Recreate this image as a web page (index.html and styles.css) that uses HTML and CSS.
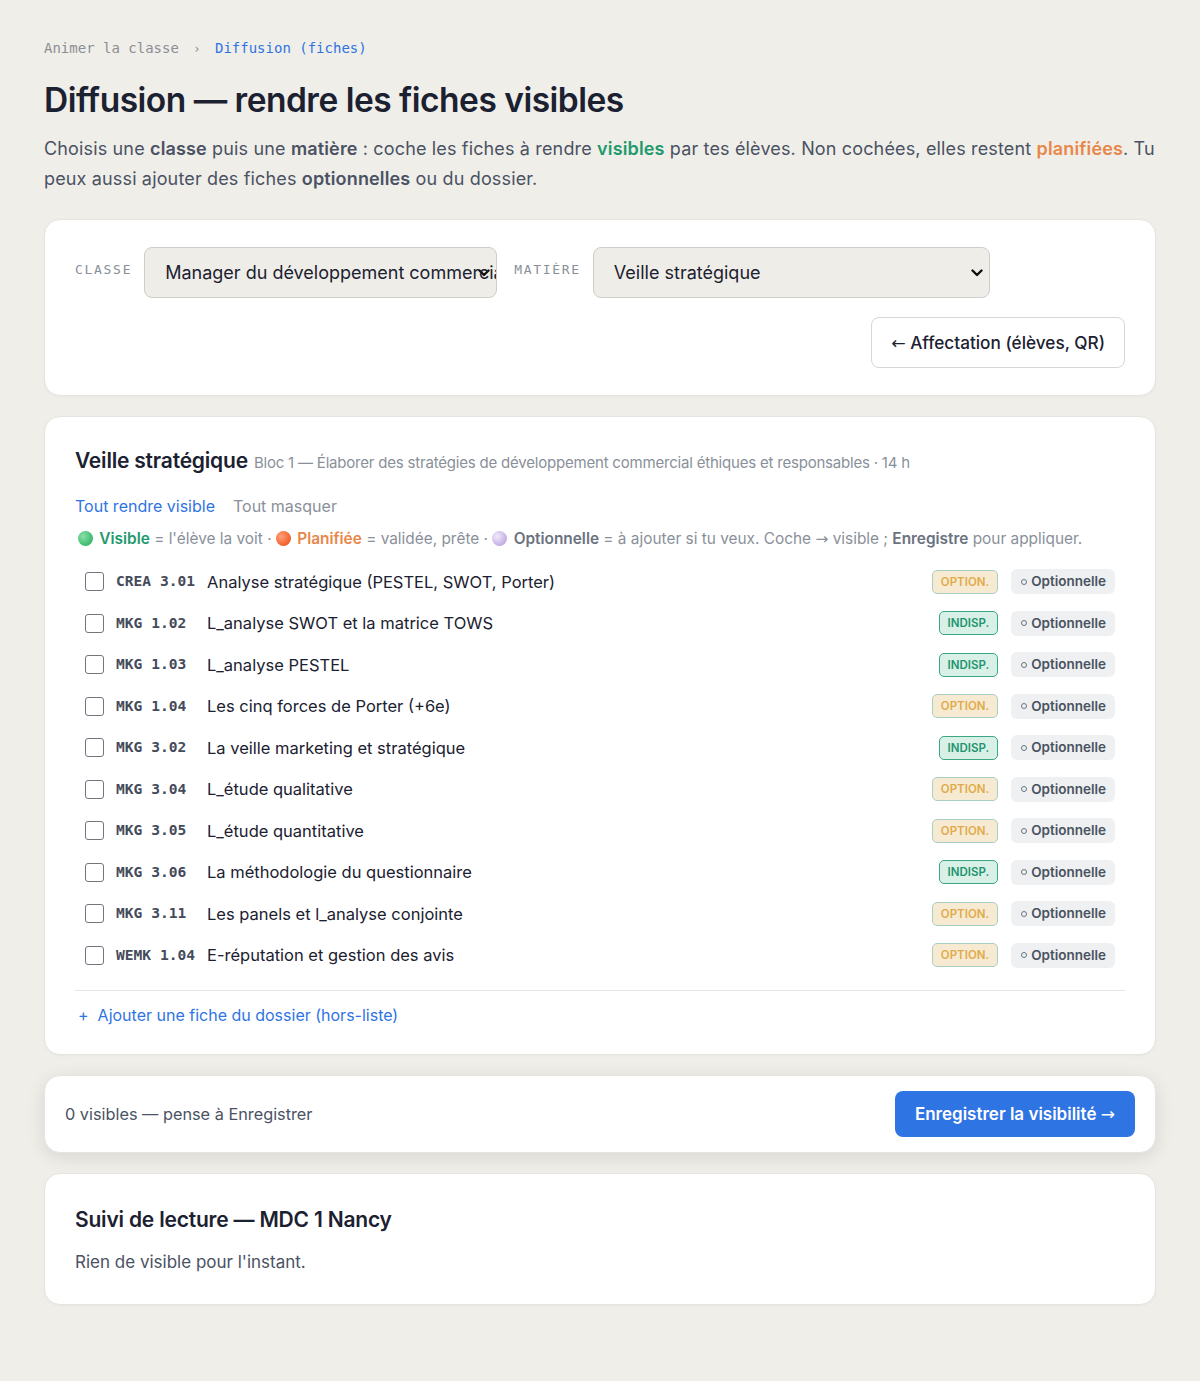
FILE: index.html
```html
<!DOCTYPE html>
<html lang="fr">
<head>
    <meta charset="UTF-8">
    <meta name="viewport" content="width=device-width, initial-scale=1.0">
    <title>Diffusion — rendre les fiches visibles</title>
    <link rel="stylesheet" href="styles.css">
</head>
<body>
    <div class="container">
        <div class="breadcrumb">
            <span>Animer la classe</span>
            <span class="sep">›</span>
            <span class="current">Diffusion (fiches)</span>
        </div>

        <h1 class="page-title">Diffusion — rendre les fiches visibles</h1>
        <p class="intro">Choisis une <b>classe</b> puis une <b>matière</b> : coche les fiches à rendre <b class="green">visibles</b> par tes élèves. Non cochées, elles restent <b class="orange">planifiées</b>. Tu peux aussi ajouter des fiches <b>optionnelles</b> ou du dossier.</p>

        <!-- choix classe / matière -->
        <div class="card filters">
            <label class="field-label" for="classe">Classe</label>
            <select id="classe" class="select select-classe">
                <option>Manager du développement commercial — MDC 1 Nancy</option>
            </select>
            <label class="field-label" for="matiere">Matière</label>
            <select id="matiere" class="select select-matiere">
                <option>Veille stratégique</option>
            </select>
            <button class="btn-outline"><span class="arr">←</span> Affectation (élèves, QR)</button>
        </div>

        <!-- liste des fiches -->
        <div class="card fiches">
            <div class="fiches-head">
                <h2>Veille stratégique</h2>
                <span class="sub">Bloc 1 — Élaborer des stratégies de développement commercial éthiques et responsables · 14 h</span>
            </div>

            <div class="bulk">
                <a href="#" class="link">Tout rendre visible</a>
                <a href="#" class="link muted">Tout masquer</a>
            </div>

            <div class="legend">
                <span class="dot dot-green"></span> <b class="green">Visible</b> = l'élève la voit ·
                <span class="dot dot-orange"></span> <b class="orange">Planifiée</b> = validée, prête ·
                <span class="dot dot-purple"></span> <b>Optionnelle</b> = à ajouter si tu veux. Coche <span class="arr">→</span> visible ; <b>Enregistre</b> pour appliquer.
            </div>

            <ul class="fiche-list" id="fiche-list"></ul>

            <div class="add-row">
                <a href="#" class="link"><span class="plus">+</span>Ajouter une fiche du dossier (hors-liste)</a>
            </div>
        </div>

        <!-- barre d'enregistrement -->
        <div class="card save-bar">
            <span id="count">0 visibles — pense à Enregistrer</span>
            <button class="btn-primary">Enregistrer la visibilité <span class="arr">→</span></button>
        </div>

        <!-- suivi -->
        <div class="card suivi">
            <h2>Suivi de lecture — MDC 1 Nancy</h2>
            <p>Rien de visible pour l'instant.</p>
        </div>
    </div>

    <script>
        const fiches = [
            { code: 'CREA 3.01', titre: 'Analyse stratégique (PESTEL, SWOT, Porter)', statut: 'opt' },
            { code: 'MKG 1.02', titre: 'L_analyse SWOT et la matrice TOWS', statut: 'ind' },
            { code: 'MKG 1.03', titre: 'L_analyse PESTEL', statut: 'ind' },
            { code: 'MKG 1.04', titre: 'Les cinq forces de Porter (+6e)', statut: 'opt' },
            { code: 'MKG 3.02', titre: 'La veille marketing et stratégique', statut: 'ind' },
            { code: 'MKG 3.04', titre: 'L_étude qualitative', statut: 'opt' },
            { code: 'MKG 3.05', titre: 'L_étude quantitative', statut: 'opt' },
            { code: 'MKG 3.06', titre: 'La méthodologie du questionnaire', statut: 'ind' },
            { code: 'MKG 3.11', titre: 'Les panels et l_analyse conjointe', statut: 'opt' },
            { code: 'WEMK 1.04', titre: 'E-réputation et gestion des avis', statut: 'opt' }
        ];

        const list = document.getElementById('fiche-list');
        const count = document.getElementById('count');

        fiches.forEach(function(f) {
            const li = document.createElement('li');
            li.className = 'fiche';
            const badge = f.statut === 'opt'
                ? '<span class="badge badge-opt">OPTION.</span>'
                : '<span class="badge badge-ind">INDISP.</span>';
            li.innerHTML =
                '<label class="fiche-main"><input type="checkbox">' +
                '<span class="code">' + f.code + '</span>' +
                '<span class="titre">' + f.titre + '</span></label>' +
                badge +
                '<span class="pill"><i class="ring"></i>Optionnelle</span>';
            list.appendChild(li);
        });

        list.addEventListener('change', function() {
            const n = list.querySelectorAll('input:checked').length;
            count.textContent = n + ' visibles — pense à Enregistrer';
        });
    </script>
</body>
</html>
```

FILE: styles.css
```css
* {
    box-sizing: border-box;
    margin: 0;
    padding: 0;
}

body {
    font-family: Inter, 'Noto Sans', sans-serif;
    background-color: #f0eee9;
    color: #1b2130;
    min-height: 100vh;
}

.container {
    max-width: 1200px;
    padding: 38px 44px 60px;
}

b {
    font-weight: 600;
    color: #4a5263;
}

.green { color: #1f9a6e !important; }
.orange { color: #e8874a !important; }

.arr {
    font-family: 'DejaVu Sans', sans-serif;
    font-weight: normal;
    font-size: 1em;
}

.breadcrumb {
    font-family: 'DejaVu Sans Mono', 'Liberation Mono', monospace;
    font-size: 14px;
    line-height: 20px;
    color: #8b8f95;
}

.breadcrumb .sep {
    margin: 0 6px;
    font-size: 12px;
}

.breadcrumb .current {
    color: #2f74e3;
}

.page-title {
    font-size: 33.5px;
    font-weight: 600;
    letter-spacing: -0.5px;
    line-height: 42px;
    margin-top: 20px;
    color: #1b2130;
}

.intro {
    margin-top: 13px;
    font-size: 18px;
    letter-spacing: 0.15px;
    line-height: 30px;
    color: #4a5263;
}

.card {
    background: white;
    border: 1px solid #e6e4df;
    border-radius: 16px;
    box-shadow: 0 1px 3px rgba(0,0,0,0.03);
}

/* filtres */
.filters {
    margin-top: 25px;
    display: flex;
    flex-wrap: wrap;
    align-items: center;
    row-gap: 19px;
    padding: 27px 30px 27px;
}

.field-label {
    font-family: 'DejaVu Sans Mono', 'Liberation Mono', monospace;
    font-size: 13px;
    letter-spacing: 1.7px;
    text-transform: uppercase;
    color: #8a9098;
    margin-right: 12px;
    align-self: flex-start;
    padding-top: 15px;
}

.select {
    appearance: none;
    height: 51px;
    font-family: Inter, sans-serif;
    font-size: 18px;
    color: #1b2130;
    background-color: #efede8;
    background-image: url("data:image/svg+xml,%3Csvg xmlns='http://www.w3.org/2000/svg' width='12' height='8' viewBox='0 0 12 8'%3E%3Cpath d='M1.5 1.5 6 6l4.5-4.5' fill='none' stroke='%23111' stroke-width='2.4' stroke-linecap='round' stroke-linejoin='round'/%3E%3C/svg%3E");
    background-repeat: no-repeat;
    background-position: right 6px center;
    border: 1px solid #cfcdc8;
    border-radius: 8px;
    padding: 0 4px 0 20px;
}

.select-classe {
    width: 353px;
    margin-right: 17px;
    padding-right: 0;
}

.select-matiere {
    width: 397px;
}

.btn-outline {
    margin-left: auto;
    height: 51px;
    padding: 0 19px;
    font-family: Inter, sans-serif;
    font-size: 17.2px;
    font-weight: 500;
    color: #1b2130;
    background: white;
    border: 1px solid #d8d6d0;
    border-radius: 8px;
    cursor: pointer;
}

/* fiches */
.fiches {
    margin-top: 20px;
    padding: 30px 30px 27px;
}

.fiches-head {
    display: flex;
    align-items: baseline;
    gap: 6px;
}

.fiches-head h2,
.suivi h2 {
    font-size: 21px;
    font-weight: 600;
    letter-spacing: -0.2px;
    line-height: 28px;
    color: #1b2130;
}

.sub {
    font-size: 15px;
    color: #8a909a;
    letter-spacing: -0.2px;
}

.bulk {
    margin-top: 19px;
    display: flex;
    gap: 18px;
    font-size: 16px;
    line-height: 24px;
}

.link {
    color: #2f74e3;
    text-decoration: none;
}

.link.muted {
    color: #8a909a;
}

.legend {
    margin-top: 9px;
    font-size: 15.4px;
    line-height: 24px;
    color: #8a909a;
    padding-left: 3px;
}

.legend b {
    color: #6b7280;
}

.dot {
    display: inline-block;
    width: 15px;
    height: 15px;
    border-radius: 50%;
    vertical-align: -2px;
    margin-right: 2px;
}

.dot-green { background: radial-gradient(circle at 35% 35%, #8be0a8, #3cb96e 70%); }
.dot-orange { background: radial-gradient(circle at 35% 35%, #ffa07a, #f1602b 70%); }
.dot-purple { background: radial-gradient(circle at 35% 35%, #f1ebfb, #bfa9e3 75%); }

.fiche-list {
    list-style: none;
    margin-top: 10px;
}

.fiche {
    display: flex;
    align-items: center;
    height: 41.5px;
    padding: 0 10px;
    gap: 13px;
}

.fiche-main {
    flex: 1;
    display: flex;
    align-items: center;
    cursor: pointer;
}

.fiche input {
    appearance: none;
    width: 19px;
    height: 19px;
    border: 1.5px solid #70757e;
    border-radius: 3px;
    background: white;
    margin-right: 12px;
}

.fiche input:checked {
    background: #2f74e3;
    border-color: #2f74e3;
}

.code {
    width: 91px;
    flex-shrink: 0;
    font-family: 'DejaVu Sans Mono', 'Liberation Mono', monospace;
    font-size: 14.6px;
    font-weight: bold;
    color: #454b5a;
    margin-top: -2px;
}

.titre {
    font-size: 16.5px;
    color: #1b2130;
}

.badge {
    font-size: 11.5px;
    font-weight: 600;
    line-height: 22px;
    padding: 0 8px;
    border-radius: 5px;
    border: 1px solid;
}

.badge-opt {
    background: #f7ead2;
    border-color: #a9cfc4;
    color: #e0aa4a;
}

.badge-ind {
    background: #d8f0e5;
    border-color: #3aa886;
    color: #1e9470;
}

.pill {
    display: inline-flex;
    align-items: center;
    font-size: 13.5px;
    font-weight: 600;
    line-height: 25px;
    padding: 0 9px 0 10px;
    border-radius: 6px;
    background: #eef0f2;
    color: #4a5260;
}

.ring {
    display: inline-block;
    width: 6px;
    height: 6px;
    border: 1px solid #6b7280;
    border-radius: 50%;
    margin-right: 4px;
}

.add-row {
    margin-top: 14px;
    border-top: 1px solid #e4e4e2;
    padding-top: 12px;
    font-size: 16px;
    line-height: 24px;
}

.plus {
    margin: 0 9px 0 3px;
}

/* barre */
.save-bar {
    margin-top: 20px;
    display: flex;
    align-items: center;
    justify-content: space-between;
    padding: 15px 20px 15px 20px;
    font-size: 16.3px;
    color: #4a5263;
    box-shadow: 0 4px 18px rgba(0,0,0,0.10);
}

.btn-primary {
    height: 46px;
    padding: 0 20px;
    font-family: Inter, sans-serif;
    font-size: 17px;
    font-weight: 600;
    color: white;
    background: #2f74e3;
    border: none;
    border-radius: 8px;
    cursor: pointer;
}

/* suivi */
.suivi {
    margin-top: 20px;
    padding: 32px 30px 30px;
}

.suivi p {
    margin-top: 16px;
    font-size: 17px;
    line-height: 24px;
    color: #4a5263;
}
```
